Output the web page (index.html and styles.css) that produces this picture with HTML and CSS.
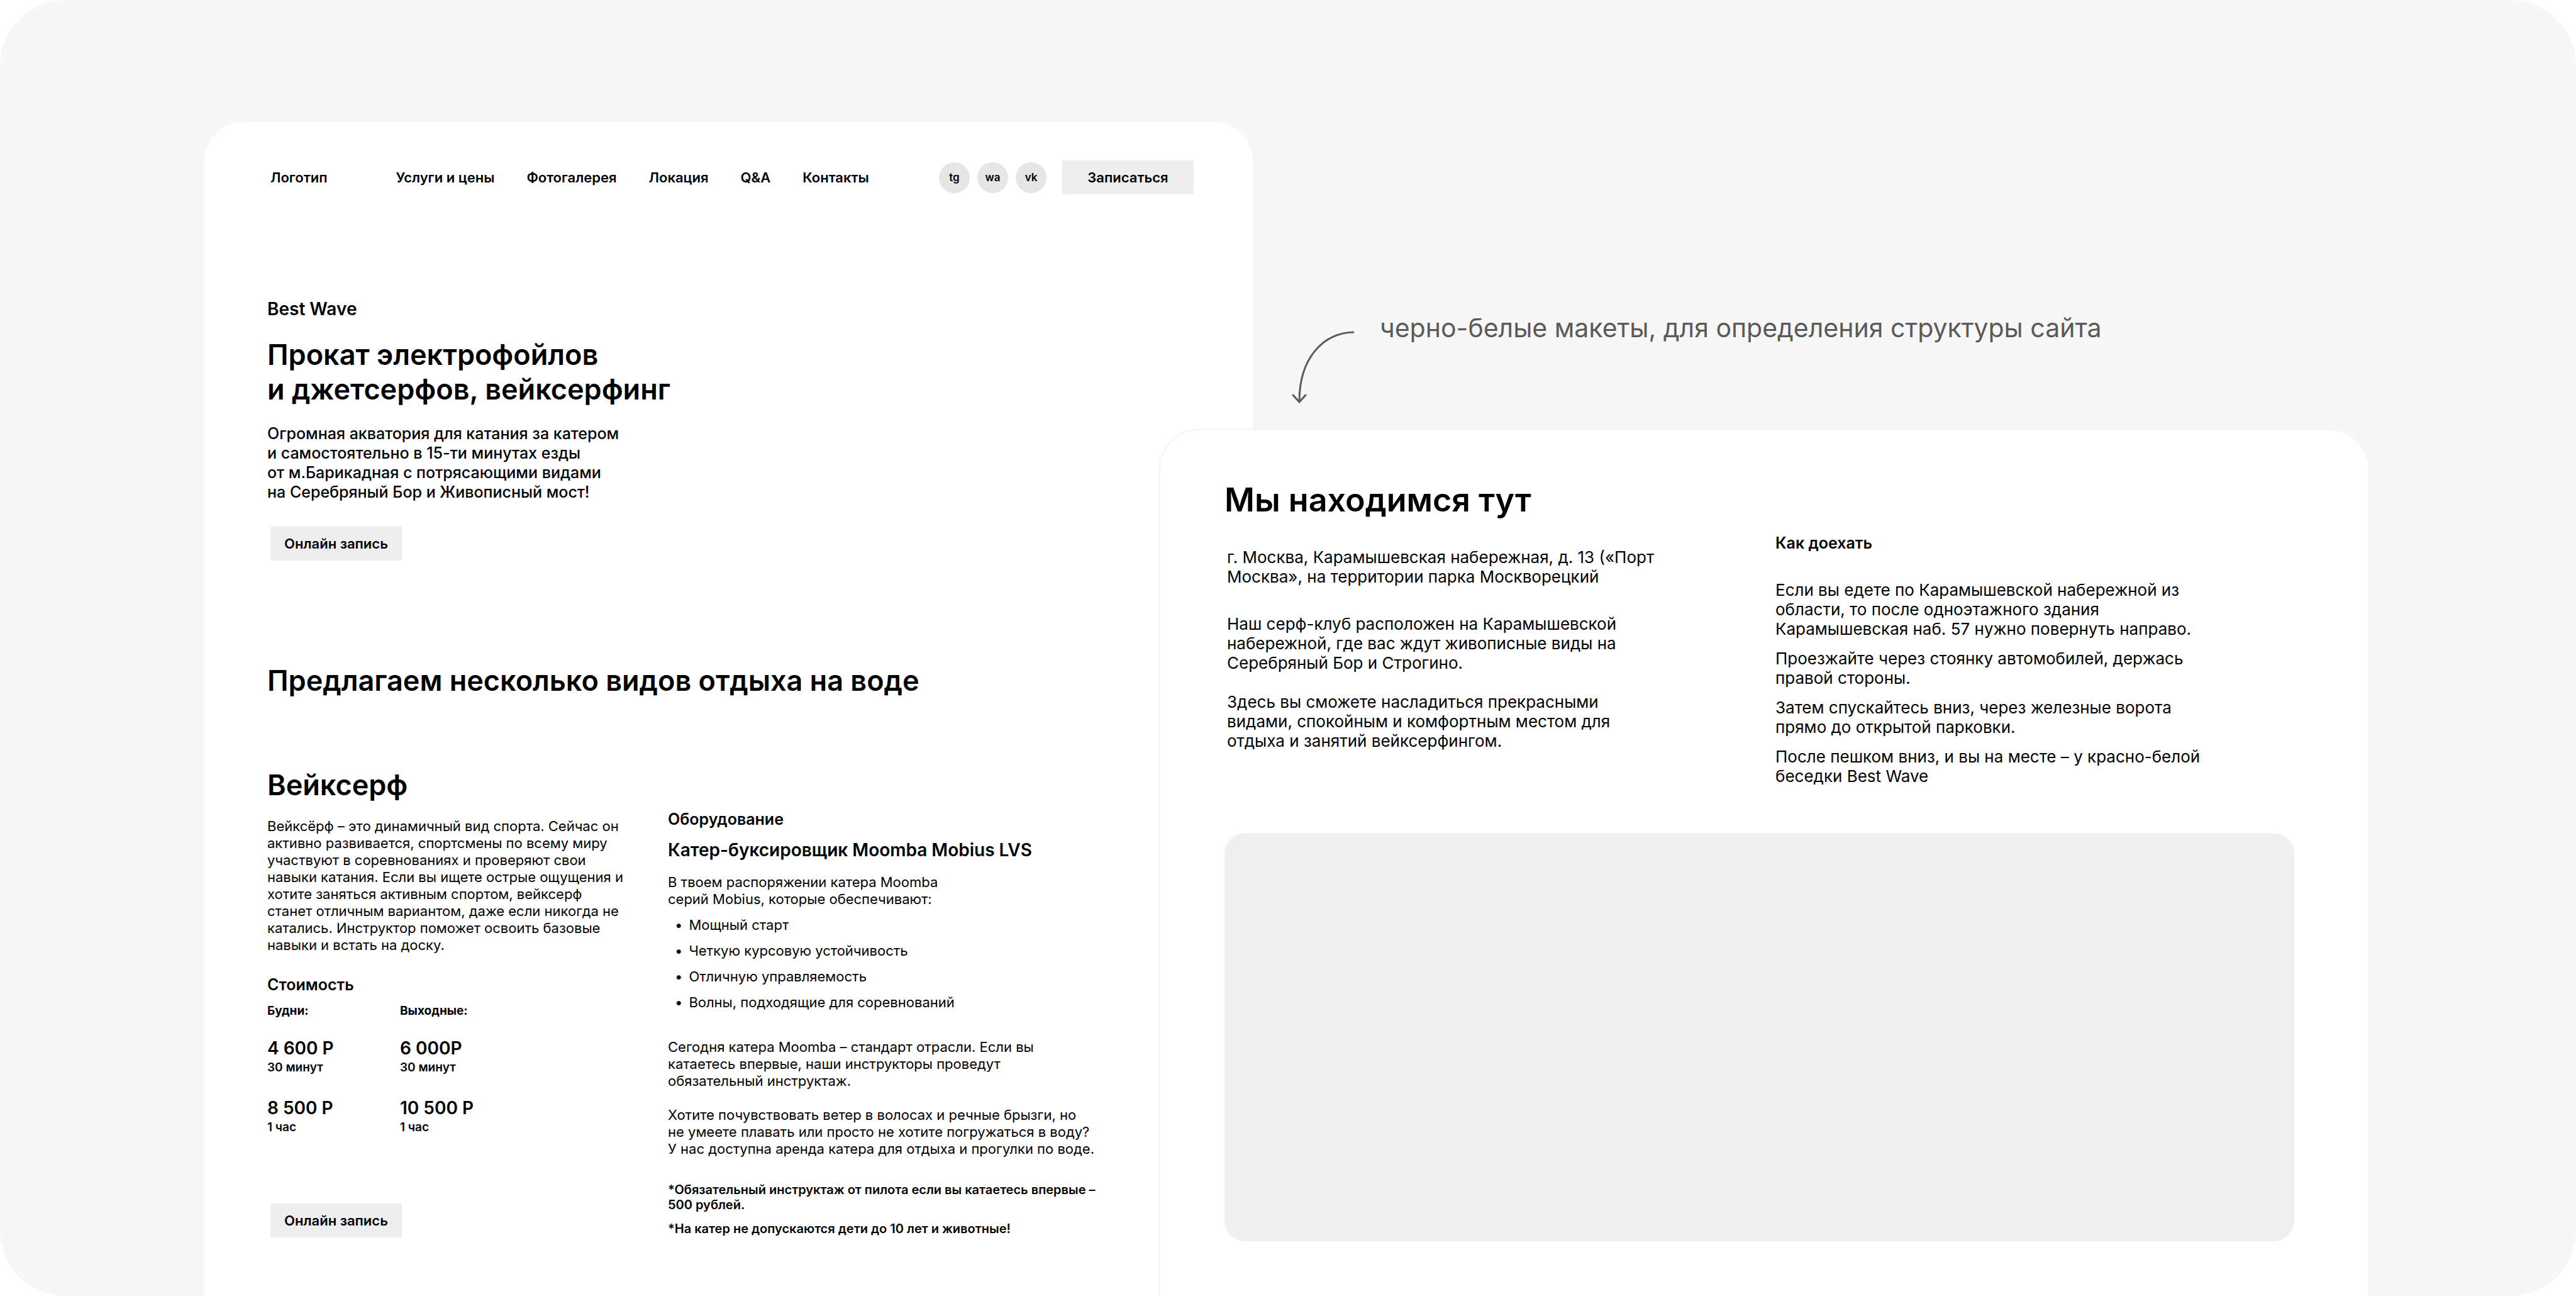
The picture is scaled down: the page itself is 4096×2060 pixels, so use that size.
FILE: index.html
```html
<!DOCTYPE html>
<html lang="ru">
<head>
<meta charset="utf-8">
<meta name="viewport" content="width=device-width, initial-scale=1">
<title>Best Wave</title>
<link rel="stylesheet" href="styles.css">
</head>
<body>
<main class="stage">
  <section class="sheet sheet-home">
    <header class="topbar">
      <a class="logo" href="#">Логотип</a>
      <nav class="menu">
        <a href="#services">Услуги и цены</a>
        <a href="#gallery">Фотогалерея</a>
        <a href="#location">Локация</a>
        <a href="#qa">Q&amp;A</a>
        <a href="#contacts">Контакты</a>
      </nav>
      <div class="actions">
        <div class="socials">
          <a class="social" href="#tg">tg</a>
          <a class="social" href="#wa">wa</a>
          <a class="social" href="#vk">vk</a>
        </div>
        <button class="button" type="button">Записаться</button>
      </div>
    </header>

    <div class="hero">
      <p class="brand">Best Wave</p>
      <h1 class="title">Прокат электрофойлов<br>и джетсерфов, вейксерфинг</h1>
      <p class="lead">Огромная акватория для катания за катером<br>и самостоятельно в 15-ти минутах езды<br>от м.Барикадная с потрясающими видами<br>на Серебряный Бор и Живописный мост!</p>
      <button class="button button-inset" type="button">Онлайн запись</button>
    </div>

    <h2 class="title services-title" id="services">Предлагаем несколько видов отдыха на воде</h2>

    <div class="service">
      <div class="service-main">
        <h2 class="title">Вейксерф</h2>
        <p class="about">Вейксёрф – это динамичный вид спорта. Сейчас он активно развивается, спортсмены по всему миру участвуют в соревнованиях и проверяют свои навыки катания. Если вы ищете острые ощущения и хотите заняться активным спортом, вейксерф станет отличным вариантом, даже если никогда не катались. Инструктор поможет освоить базовые навыки и встать на доску.</p>
        <table class="prices">
          <caption class="subtitle">Стоимость</caption>
          <thead>
            <tr><th scope="col">Будни:</th><th scope="col">Выходные:</th></tr>
          </thead>
          <tbody>
            <tr>
              <td><span class="price">4 600 Р</span><span class="duration">30 минут</span></td>
              <td><span class="price">6 000Р</span><span class="duration">30 минут</span></td>
            </tr>
            <tr>
              <td><span class="price">8 500 Р</span><span class="duration">1 час</span></td>
              <td><span class="price">10 500 Р</span><span class="duration">1 час</span></td>
            </tr>
          </tbody>
        </table>
        <button class="button button-inset" type="button">Онлайн запись</button>
      </div>

      <div class="equipment">
        <h3 class="subtitle">Оборудование</h3>
        <p class="model">Катер-буксировщик Moomba Mobius LVS</p>
        <p>В твоем распоряжении катера Moomba<br>серий Mobius, которые обеспечивают:</p>
        <ul class="features">
          <li>Мощный старт</li>
          <li>Четкую курсовую устойчивость</li>
          <li>Отличную управляемость</li>
          <li>Волны, подходящие для соревнований</li>
        </ul>
        <div class="details">
          <p>Сегодня катера Moomba – стандарт отрасли. Если вы<br>катаетесь впервые, наши инструкторы проведут<br>обязательный инструктаж.</p>
          <p>Хотите почувствовать ветер в волосах и речные брызги, но<br>не умеете плавать или просто не хотите погружаться в воду?<br>У нас доступна аренда катера для отдыха и прогулки по воде.</p>
        </div>
        <div class="notes">
          <p>*Обязательный инструктаж от пилота если вы катаетесь впервые –<br>500 рублей.</p>
          <p>*На катер не допускаются дети до 10 лет и животные!</p>
        </div>
      </div>
    </div>
  </section>

  <aside class="remark">
    <svg class="remark-arrow" width="104" height="120" viewBox="0 0 104 120" aria-hidden="true">
      <path d="M101 4C51 5 14 46 14 114"/>
      <path stroke-linecap="round" d="M4 104L14 115L24 104"/>
    </svg>
    <p class="remark-text">черно-белые макеты, для определения структуры сайта</p>
  </aside>

  <section class="sheet sheet-location" id="location">
    <div class="location-info">
      <div class="location-main">
        <h2 class="location-title">Мы находимся тут</h2>
        <div class="location-text">
          <p class="address">г. Москва, Карамышевская набережная, д. 13 («Порт Москва», на территории парка Москворецкий</p>
          <p>Наш серф-клуб расположен на Карамышевской набережной, где вас ждут живописные виды на Серебряный Бор и Строгино.</p>
          <p>Здесь вы сможете насладиться прекрасными видами, спокойным и комфортным местом для отдыха и занятий вейксерфингом.</p>
        </div>
      </div>
      <div class="route">
        <h3 class="subtitle">Как доехать</h3>
        <p>Если вы едете по Карамышевской набережной из области, то после одноэтажного здания Карамышевская наб. 57 нужно повернуть направо.</p>
        <p>Проезжайте через стоянку автомобилей, держась правой стороны.</p>
        <p>Затем спускайтесь вниз, через железные ворота прямо до открытой парковки.</p>
        <p>После пешком вниз, и вы на месте – у красно-белой беседки Best Wave</p>
      </div>
    </div>
    <div class="map"></div>
  </section>
</main>
</body>
</html>
```

FILE: styles.css
```css
* {
  box-sizing: border-box;
  margin: 0;
  padding: 0;
}

body {
  background: #fff;
  color: #000;
  font-family: Inter, "Liberation Sans", sans-serif;
  font-size: 22px;
  line-height: 27px;
}

a {
  color: inherit;
  text-decoration: none;
}

/* Canvas: two overlapping sheets and a remark between them */
.stage {
  display: grid;
  grid-template-columns: 325fr 1517fr 150fr 1776fr 328fr;
  grid-template-rows: 194px 487px 1fr;
  min-height: 100vh;
  overflow: hidden;
  border-radius: 104px;
  background: #f7f7f7;
}

.sheet {
  min-width: 0;
  background: #fff;
}

.sheet-home {
  grid-area: 2 / 2 / 4 / 4;
  padding: 61px 94px 90px 100px;
  border-radius: 62px 62px 0 0;
}

/* Header */
.topbar {
  display: flex;
  align-items: center;
  padding-left: 5px;
  font-weight: 600;
  white-space: nowrap;
}

.menu {
  display: flex;
  gap: 51px;
  margin-left: 109px;
}

.actions {
  display: flex;
  align-items: center;
  gap: 25px;
  margin-left: auto;
}

.socials {
  display: flex;
  gap: 12px;
}

.social {
  display: flex;
  align-items: center;
  justify-content: center;
  width: 49px;
  height: 49px;
  border-radius: 50%;
  background: #e6e6e6;
  font-size: 17px;
}

.button {
  display: block;
  width: 209px;
  height: 54px;
  border: 0;
  background: #eee;
  color: inherit;
  font: 600 22px/27px Inter, "Liberation Sans", sans-serif;
  white-space: nowrap;
}

.button-inset {
  margin-left: 5px;
}

/* Hero */
.hero {
  margin-top: 165px;
}

.brand {
  font-size: 28px;
  font-weight: 600;
  line-height: 34px;
}

.title {
  font-size: 45px;
  font-weight: 600;
  line-height: 55px;
}

.hero .title {
  margin: 28px 0;
}

.lead {
  margin-bottom: 39px;
  font-size: 25px;
  font-weight: 500;
  line-height: 31px;
}

.services-title {
  margin: 163px 0 111px;
}

/* Service */
.service {
  display: grid;
  grid-template-columns: 637fr 836fr;
}

.about {
  max-width: 574px;
  margin: 25px 0 34px;
}

.subtitle {
  font-size: 25px;
  font-weight: 600;
  line-height: 30px;
  text-align: left;
}

.prices {
  margin-bottom: 110px;
  border-collapse: collapse;
  font-weight: 600;
}

.prices th,
.prices td {
  width: 211px;
  text-align: left;
  vertical-align: top;
}

.prices th {
  padding-top: 15px;
  font-size: 19px;
  line-height: 23px;
}

.prices td {
  padding-top: 31px;
}

.prices tr + tr td {
  padding-top: 36px;
}

.price {
  display: block;
  margin-bottom: 2px;
  font-size: 28px;
  line-height: 34px;
}

.duration {
  display: block;
  font-size: 19px;
  line-height: 23px;
}

.equipment {
  padding-top: 67px;
}

.model {
  margin: 17px 0 21px;
  font-size: 28px;
  font-weight: 600;
  line-height: 34px;
}

.features {
  display: grid;
  gap: 14px;
  margin: 14px 0 44px;
  list-style: none;
}

.features li {
  display: flex;
  gap: 10px;
  padding-left: 11px;
}

.features li::before {
  content: "•";
}

.details {
  display: grid;
  gap: 27px;
}

.notes {
  display: grid;
  gap: 14px;
  margin-top: 39px;
  font-size: 20px;
  font-weight: 600;
  line-height: 24px;
}

/* Remark */
.remark {
  grid-area: 2 / 4;
  display: flex;
  align-items: flex-start;
  gap: 38px;
  padding: 300px 0 0 60px;
  color: #5a5a5a;
}

.remark-arrow {
  flex: none;
  margin-top: 30px;
  fill: none;
  stroke: currentColor;
  stroke-width: 3;
}

.remark-text {
  font-size: 41px;
  line-height: 54px;
}

/* Location */
.sheet-location {
  grid-area: 3 / 3 / 4 / 5;
  padding: 80px 117px 83px 102px;
  border: 3px solid #f7f7f7;
  border-bottom: 0;
  border-radius: 65px 65px 0 0;
  font-size: 26px;
  line-height: 31px;
}

.location-info {
  display: grid;
  grid-template-columns: 876fr 825fr;
}

.location-title {
  font-size: 52px;
  font-weight: 600;
  line-height: 62px;
}

.location-text {
  display: grid;
  gap: 31px;
  max-width: 660px;
  margin-top: 44px;
  padding-left: 4px;
}

.address {
  width: 700px;
  margin-bottom: 13px;
}

.route {
  display: grid;
  align-content: start;
  gap: 16px;
  max-width: 690px;
  padding-top: 84px;
}

.route .subtitle {
  margin-bottom: 28px;
}

.map {
  height: 649px;
  margin-top: 75px;
  border-radius: 33px;
  background: #f0f0f0;
}
```
